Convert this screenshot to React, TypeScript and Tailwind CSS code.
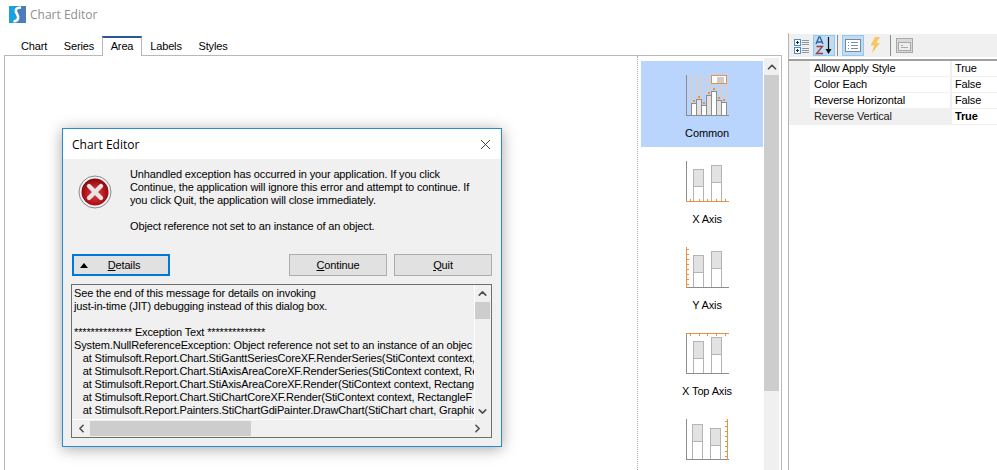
import React from 'react';
import { X, ChevronUp, ChevronDown, ChevronLeft, ChevronRight } from 'lucide-react';

const TABS = [
  { name: 'Chart', w: 'w-[44px]' },
  { name: 'Series', w: 'w-[46px]' },
  { name: 'Area', w: 'w-[40px]' },
  { name: 'Labels', w: 'w-[48px]' },
  { name: 'Styles', w: 'w-[46px]' },
];

const PROPS = [
  { name: 'Allow Apply Style', value: 'True' },
  { name: 'Color Each', value: 'False' },
  { name: 'Reverse Horizontal', value: 'False' },
  { name: 'Reverse Vertical', value: 'True', selected: true },
];

const LOG = [
  'See the end of this message for details on invoking',
  'just-in-time (JIT) debugging instead of this dialog box.',
  '\u00a0',
  '************** Exception Text **************',
  'System.NullReferenceException: Object reference not set to an instance of an objec',
  '   at Stimulsoft.Report.Chart.StiGanttSeriesCoreXF.RenderSeries(StiContext context, R',
  '   at Stimulsoft.Report.Chart.StiAxisAreaCoreXF.RenderSeries(StiContext context, Rec',
  '   at Stimulsoft.Report.Chart.StiAxisAreaCoreXF.Render(StiContext context, Rectangle',
  '   at Stimulsoft.Report.Chart.StiChartCoreXF.Render(StiContext context, RectangleF r',
  '   at Stimulsoft.Report.Painters.StiChartGdiPainter.DrawChart(StiChart chart, Graphics',
];

const Logo = () => (
  <svg width="17" height="17" viewBox="0 0 17 17" className="shrink-0">
    <rect width="9" height="17" fill="#1ba1e2" />
    <rect x="8" width="9" height="17" fill="#4c7db8" />
    <path d="M12 1.5 C6 1.5 6 5 8 8 C10 11 10 15 4.5 15.5" fill="none" stroke="#fff" strokeWidth="2.6" />
  </svg>
);

const ErrorIcon = () => (
  <svg width="34" height="34" viewBox="0 0 34 34" className="shrink-0">
    <defs>
      <radialGradient id="red" cx="50%" cy="55%" r="55%">
        <stop offset="0%" stopColor="#e0464c" />
        <stop offset="65%" stopColor="#b9141c" />
        <stop offset="100%" stopColor="#7c0a10" />
      </radialGradient>
    </defs>
    <circle cx="17" cy="17" r="16" fill="#f4f4f4" stroke="#8a8a8a" />
    <circle cx="17" cy="17" r="13.5" fill="url(#red)" />
    <path d="M11 11 L23 23 M23 11 L11 23" stroke="#e6e6e6" strokeWidth="4.4" strokeLinecap="round" />
  </svg>
);

// column chart thumbnails, the orange part marks which axis the item is about
const AxisIcon = ({ kind }: { kind: 'x' | 'y' | 'top' | 'right' }) => {
  const shift = kind === 'right' ? -1 : 0;
  const ticks = [0, 1, 2, 3, 4, 5, 6, 7];
  return (
    <svg width="43" height="42" viewBox="0 0 43 42">
      <g stroke="#b4b4b4" fill="#fff">
        <rect x={7.5 + shift} y={kind === 'right' ? 5.5 : 8.5} width="10" height={kind === 'right' ? 35 : 32} />
        <rect x={7.5 + shift} y={kind === 'right' ? 5.5 : 8.5} width="10" height="17" fill="#e2e2e2" />
        <rect x={25.5 + shift} y={kind === 'right' ? 9.5 : 4.5} width="10" height={kind === 'right' ? 31 : 36} />
        <rect x={25.5 + shift} y={kind === 'right' ? 9.5 : 4.5} width="10" height="17" fill="#e2e2e2" />
      </g>
      <path d="M0.5 0 V41 M0 40.5 H43" stroke="#8c8c8c" fill="none" />
      {kind === 'x' && (
        <g stroke="#e8913f">
          <path d="M0 40.5 H43" />
          {[4, 13, 21, 30, 39].map((t) => <path key={t} d={`M${t + 0.5} 38 V41`} />)}
        </g>
      )}
      {kind === 'y' && (
        <g stroke="#e8913f">
          <path d="M0.5 0 V41" />
          {ticks.map((t) => <path key={t} d={`M1 ${t * 5 + 2.5} H3`} />)}
        </g>
      )}
      {kind === 'top' && (
        <g stroke="#e8913f">
          <path d="M0 0.5 H43" />
          {[4, 13, 21, 30, 39].map((t) => <path key={t} d={`M${t + 0.5} 1 V3`} />)}
        </g>
      )}
      {kind === 'right' && (
        <g stroke="#e8913f">
          <path d="M41.5 0 V41" />
          {ticks.map((t) => <path key={t} d={`M39 ${t * 5 + 2.5} H41`} />)}
        </g>
      )}
    </svg>
  );
};

const CommonIcon = () => {
  const bars = [
    { x: 5, top: 28 },
    { x: 10, top: 24 },
    { x: 15, top: 30 },
    { x: 20, top: 20 },
    { x: 25, top: 16 },
    { x: 30, top: 25 },
    { x: 35, top: 27 },
  ];
  return (
    <svg width="43" height="42" viewBox="0 0 43 42">
      {[5, 10, 15, 20, 25, 30, 35, 40].map((x) => (
        <path key={x} d={`M${x + 0.5} 0 V28`} stroke="#f3c9a0" />
      ))}
      {bars.map((b, i) => (
        <rect key={b.x} x={b.x + 0.5} y={b.top + 0.5} width="5" height={40 - b.top} fill={i % 2 ? '#e2e2e2' : '#fff'} stroke="#8c8c8c" />
      ))}
      {bars.map((b) => (
        <rect key={b.x} x={b.x + 2} y={b.top - 3} width="2" height="2" fill="#e8913f" />
      ))}
      <path d="M0.5 0 V41 M0 40.5 H43" stroke="#8c8c8c" fill="none" />
      <rect x="25.5" y="0.5" width="15" height="8" fill="#fff" stroke="#e8913f" />
      <path d="M31 3 H38 M31 5 H38 M31 7 H38" stroke="#9a9a9a" />
    </svg>
  );
};

const ToolButton = ({ active, children }: { active?: boolean; children: React.ReactNode }) => (
  <div className={`w-[22px] h-[21px] flex items-center justify-center border ${active ? 'bg-[#c0dcf3] border-[#90c8f6]' : 'border-transparent'}`}>
    {children}
  </div>
);

const Separator = () => <div className="w-px h-[21px] bg-[#8c8c8c] mx-[2px]" />;

const DialogButton = ({ label, hot, className }: { label: string; hot: string; className: string }) => (
  <button className={`h-[22px] w-[98px] bg-[#e1e1e1] border border-[#adadad] text-black ${className}`}>
    <span className="underline">{hot}</span>
    {label}
  </button>
);

const ListItem = ({ label, active, children }: { label?: string; active?: boolean; children: React.ReactNode }) => (
  <div className={`h-[86px] shrink-0 flex flex-col items-center pt-[14px] pl-[10px] ${active ? 'bg-[#b9d4fd]' : ''}`}>
    {children}
    {label && <span className="mt-[10px]">{label}</span>}
  </div>
);

const App: React.FC = () => {
  return (
    <div className="relative w-[997px] h-[470px] overflow-hidden bg-white text-[11px] tracking-[-0.14px] text-black font-['Liberation_Sans',sans-serif] leading-[13px]">
      {/* window title */}
      <div className="h-[33px] flex items-start pt-[6px] pl-[9px] gap-[4px]">
        <Logo />
        <span className="text-[12px] tracking-normal leading-[18px] text-[#8f8f8f] font-['Open_Sans',sans-serif]">Chart Editor</span>
      </div>

      <div className="flex h-[470px]">
        {/* editor */}
        <div className="w-[778px] ml-[4px] flex flex-col">
          <div className="flex h-[23px] pt-[3px] pl-[8px] relative z-10">
            {TABS.map((t) =>
              t.name === 'Area' ? (
                <div key={t.name} className={`${t.w} h-[20px] pb-[2px] bg-white border-t-2 border-x border-t-[#2b579a] border-x-[#b5b5b5] flex items-center justify-center`}>
                  {t.name}
                </div>
              ) : (
                <div key={t.name} className={`${t.w} h-[20px] flex items-center justify-center`}>
                  {t.name}
                </div>
              )
            )}
          </div>
          <div className="flex-1 -mt-px border border-[#b9b9b9] flex min-h-0">
            <div className="w-[633px] border-r border-dotted border-[#b0b0b0]" />
            <div className="w-[126px] pl-[3px] pr-px pt-[5px] flex flex-col">
              <ListItem label="Common" active>
                <CommonIcon />
              </ListItem>
              <ListItem label="X Axis">
                <AxisIcon kind="x" />
              </ListItem>
              <ListItem label="Y Axis">
                <AxisIcon kind="y" />
              </ListItem>
              <ListItem label="X Top Axis">
                <AxisIcon kind="top" />
              </ListItem>
              <ListItem>
                <AxisIcon kind="right" />
              </ListItem>
            </div>
            {/* list scrollbar */}
            <div className="w-[15px] mt-[2px] bg-[#f0f0f0] flex flex-col">
              <div className="h-[17px] flex items-center justify-center text-[#505050]">
                <ChevronUp size={14} strokeWidth={3} />
              </div>
              <div className="h-[316px] bg-[#cdcdcd]" />
            </div>
          </div>
        </div>

        {/* property grid */}
        <div className="w-[209px] ml-[6px] border-l border-[#b5b5b5] flex flex-col">
          <div className="mt-px h-[23px] bg-[#f0f0f0] flex items-center pl-[2px]">
            <ToolButton>
              <svg width="18" height="18" viewBox="0 0 18 18">
                <rect x="1.5" y="2.5" width="6" height="6" fill="#fff" stroke="#4a90c8" />
                <rect x="1.5" y="10.5" width="6" height="6" fill="#fff" stroke="#4a90c8" />
                <path d="M3 5.5 H6 M4.5 4 V7 M3 13.5 H6" stroke="#222" />
                <path d="M4.5 12 V15" stroke="#222" />
                <path d="M9 3.5 H16 M9 5.5 H16 M9 7.5 H16 M9 11.5 H16 M9 13.5 H16 M9 15.5 H16" stroke="#8c96a4" />
              </svg>
            </ToolButton>
            <ToolButton active>
              <svg width="20" height="19" viewBox="0 0 20 19">
                <path d="M2 8 L5 1 H6 L9 8 M3 6 H8" fill="none" stroke="#2f5f9f" strokeWidth="1.3" />
                <path d="M2.5 10.5 H8.5 L2.5 17.5 H9" fill="none" stroke="#a03a3a" strokeWidth="1.3" />
                <path d="M14.5 1 V15" stroke="#111" strokeWidth="1.2" />
                <path d="M11.5 13 H17.5 L14.5 18 Z" fill="#111" />
              </svg>
            </ToolButton>
            <Separator />
            <div className="w-[2px]" />
            <ToolButton active>
              <svg width="16" height="13" viewBox="0 0 16 13">
                <rect x="0.5" y="0.5" width="15" height="12" fill="#fff" stroke="#7d8794" />
                <path d="M3 3.5 H4 M6 3.5 H13 M3 6.5 H4 M6 6.5 H13 M3 9.5 H4 M6 9.5 H13" stroke="#6f8fb5" />
              </svg>
            </ToolButton>
            <ToolButton>
              <svg width="12" height="17" viewBox="0 0 12 17">
                <path d="M6 0 H11 L7.5 6 H11 L3 16 L5 8.5 H1.5 Z" fill="#f6c766" />
              </svg>
            </ToolButton>
            <div className="w-[2px]" />
            <Separator />
            <ToolButton>
              <svg width="17" height="15" viewBox="0 0 17 15">
                <rect x="0.5" y="0.5" width="16" height="14" fill="#d8d8d8" stroke="#a8a8a8" />
                <rect x="2.5" y="4.5" width="12" height="8" fill="#eeeeee" stroke="#a8a8a8" />
                <path d="M5 7.5 H7 M5 9.5 H12" stroke="#a8a8a8" />
              </svg>
            </ToolButton>
          </div>
          <div className="mt-[2px] h-[2px] bg-[#a0a0a0] -ml-px" />
          {PROPS.map((p) => (
            <div key={p.name} className="flex h-[16px] border-b border-[#f0f0f0]">
              <div className="w-[21px] bg-[#f0f0f0]" />
              <div className={`w-[142px] pl-[4px] flex items-center border-r-2 border-[#f0f0f0] ${p.selected ? 'bg-[#f0f0f0] text-[#222]' : ''}`}>{p.name}</div>
              <div className={`flex-1 pl-[3px] flex items-center ${p.selected ? 'font-bold' : ''}`}>{p.value}</div>
            </div>
          ))}
        </div>
      </div>

      {/* exception dialog */}
      <div className="absolute left-[62px] top-[128px] w-[440px] h-[319px] bg-[#f0f0f0] border border-[#2a8ad4] shadow-[0_2px_14px_rgba(0,0,0,0.35)] flex flex-col">
        <div className="h-[30px] shrink-0 bg-white flex items-center justify-between pl-[9px] pr-[7px]">
          <span className="text-[12px] tracking-normal font-['Open_Sans',sans-serif]">Chart Editor</span>
          <X size={17} strokeWidth={1.2} className="text-[#222]" />
        </div>
        <div className="flex h-[95px] shrink-0">
          <div className="w-[67px] pl-[15px] pt-[16px]"><ErrorIcon /></div>
          <div className="flex-1 pt-[9px] pr-[31px]">
            <p>Unhandled exception has occurred in your application. If you click Continue, the application will ignore this error and attempt to continue. If you click Quit, the application will close immediately.</p>
            <p className="mt-[13px]">Object reference not set to an instance of an object.</p>
          </div>
        </div>
        <div className="flex h-[22px] shrink-0 pl-[9px]">
          <button className="relative h-[22px] w-[98px] bg-[#e1e1e1] border-2 border-[#0078d7]">
            <span className="absolute left-[6px] top-[7px] w-0 h-0 border-x-[4px] border-x-transparent border-b-[5px] border-b-black" />
            <span className="pl-[6px]"><span className="underline">D</span>etails</span>
          </button>
          <DialogButton hot="C" label="ontinue" className="ml-[119px]" />
          <DialogButton hot="Q" label="uit" className="ml-[7px]" />
        </div>
        <div className="relative mt-[8px] ml-[8px] w-[421px] h-[154px] border border-[#6e6e6e] bg-[#f0f0f0] overflow-hidden">
          <div className="h-[135px] w-[403px] pt-[2px] pl-[2px] overflow-hidden bg-[#f0f0f0] border-r border-b border-white">
            {LOG.map((l, i) => (
              <div key={i} className="whitespace-pre h-[13px]">{l}</div>
            ))}
          </div>
          <div className="absolute top-0 right-0 w-[17px] h-[135px] flex flex-col items-center">
            <div className="h-[17px] flex items-center justify-center text-[#505050]"><ChevronUp size={13} strokeWidth={3} /></div>
            <div className="w-[15px] h-[17px] bg-[#cdcdcd]" />
            <div className="flex-1" />
            <div className="h-[17px] flex items-center justify-center text-[#505050]"><ChevronDown size={13} strokeWidth={3} /></div>
          </div>
          <div className="flex h-[17px] items-center w-full">
            <div className="w-[18px] flex justify-center text-[#505050]"><ChevronLeft size={13} strokeWidth={3} /></div>
            <div className="w-[161px] h-[15px] bg-[#cdcdcd]" />
            <div className="flex-1" />
            <div className="w-[28px] flex justify-center text-[#505050]"><ChevronRight size={13} strokeWidth={3} /></div>
          </div>
        </div>
      </div>
    </div>
  );
};

export default App;
